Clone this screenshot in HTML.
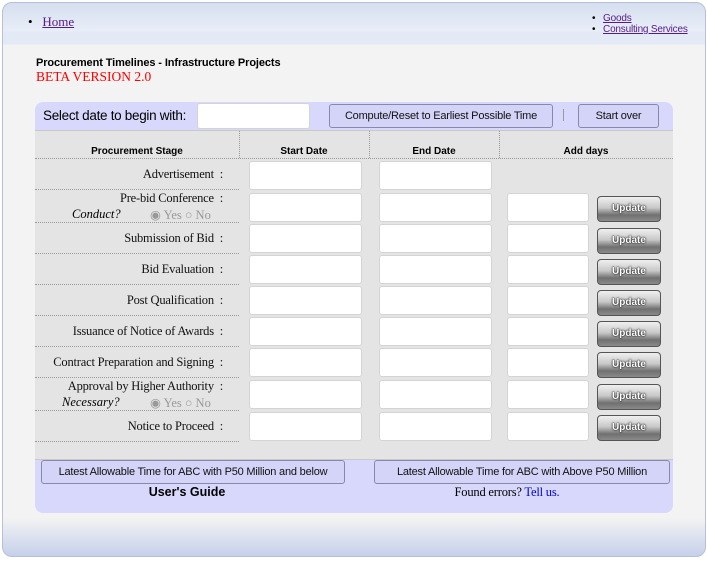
<!DOCTYPE html><html><head><style>
body{margin:0;width:707px;height:561px;background:#fff;position:relative;overflow:hidden;font-family:"Liberation Sans",sans-serif}
.a{position:absolute}
.frame{left:2px;top:2px;width:702px;height:553px;border:1px solid #b8c0d8;border-radius:10px;background:linear-gradient(#d6dff0 0,#e8eef7 28px,#e4eaf5 29px,#e4eaf5 41px,#f3f3f3 42px,#f3f3f3 515px,#c6d0ea 553px);overflow:hidden}
.inp{background:#fff;border:1px solid #d4d4d4;border-radius:3px}
.btn{background:#d4d4f8;border:1px solid #8888a8;border-radius:3px;font-size:11px;letter-spacing:-0.2px;text-align:center;color:#111;white-space:nowrap}
.upd{width:62px;height:24px;border:1px solid #555;border-radius:4px;background:linear-gradient(#f0f0f0,#c8c8c8 45%,#707070 75%,#8a8a8a);color:#fff;font-size:10px;font-weight:bold;text-align:center;line-height:24px;text-shadow:0 0 2px #000,0 0 1px #000}
.lbl{font-family:"Liberation Serif",serif;font-size:12.5px;letter-spacing:-0.2px;text-align:right;width:190px;left:33px;color:#111;white-space:nowrap}
.sep{left:35px;width:204px;border-top:1px dotted #999;height:0}
.rad{font-family:"Liberation Serif",serif;font-size:12.5px;color:#999}
</style></head><body>
<div class="a frame"></div>
<div class="a" style="left:28px;top:14px;font-family:'Liberation Serif',serif;font-size:13px">•&nbsp;&nbsp; <span style="color:#551a8b;text-decoration:underline">Home</span></div>
<div class="a" style="left:592px;top:13px;font-size:10px;line-height:11px;letter-spacing:-0.2px">•&nbsp;&nbsp; <span style="color:#551a8b;text-decoration:underline">Goods</span><br>•&nbsp;&nbsp; <span style="color:#551a8b;text-decoration:underline">Consulting Services</span></div>
<div class="a" style="left:36px;top:57px;font-size:11px;font-weight:bold;letter-spacing:-0.1px">Procurement Timelines - Infrastructure Projects</div>
<div class="a" style="left:36px;top:69px;font-family:'Liberation Serif',serif;font-size:13.5px;color:#f00">BETA VERSION 2.0</div>
<div class="a" style="left:35px;top:102px;width:638px;height:411px;background:#d8d8fc;border-radius:8px"></div>
<div class="a" style="left:35px;top:130px;width:638px;height:328px;background:#e4e4e4;border-top:1px solid #c8c8c8;border-bottom:1px solid #c8c8c8"></div>
<div class="a" style="left:43px;top:108px;font-size:13.5px;letter-spacing:-0.3px">Select date to begin with:</div>
<div class="a inp" style="left:197px;top:103px;width:111px;height:24px"></div>
<div class="a btn" style="left:329px;top:104px;width:222px;height:22px;line-height:22px">Compute/Reset to Earliest Possible Time</div>
<div class="a" style="left:563px;top:109px;width:1px;height:12px;background:#999"></div>
<div class="a btn" style="left:578px;top:104px;width:79px;height:22px;line-height:22px">Start over</div>
<div class="a" style="left:239px;top:131px;height:27px;border-left:1px dotted #999"></div>
<div class="a" style="left:369px;top:131px;height:27px;border-left:1px dotted #999"></div>
<div class="a" style="left:499px;top:131px;height:27px;border-left:1px dotted #999"></div>
<div class="a" style="left:35px;top:158px;width:638px;border-top:1px dotted #999"></div>
<div class="a" style="left:35px;top:146px;width:204px;text-align:center;font-size:10px;font-weight:bold">Procurement Stage</div>
<div class="a" style="left:239px;top:146px;width:130px;text-align:center;font-size:10px;font-weight:bold">Start Date</div>
<div class="a" style="left:369px;top:146px;width:130px;text-align:center;font-size:10px;font-weight:bold">End Date</div>
<div class="a" style="left:499px;top:146px;width:174px;text-align:center;font-size:10px;font-weight:bold">Add days</div>

<div class="a lbl" style="top:167px">Advertisement&nbsp; :</div>
<div class="a lbl" style="top:191px">Pre-bid Conference&nbsp; :</div>
<div class="a" style="left:72px;top:207px;font-family:'Liberation Serif',serif;font-size:12.5px;font-style:italic">Conduct?</div>
<div class="a rad" style="left:150px;top:207px">◉ Yes ○ No</div>
<div class="a lbl" style="top:231px">Submission of Bid&nbsp; :</div>
<div class="a lbl" style="top:262px">Bid Evaluation&nbsp; :</div>
<div class="a lbl" style="top:293px">Post Qualification&nbsp; :</div>
<div class="a lbl" style="top:324px">Issuance of Notice of Awards&nbsp; :</div>
<div class="a lbl" style="top:355px">Contract Preparation and Signing&nbsp; :</div>
<div class="a lbl" style="top:379px">Approval by Higher Authority&nbsp; :</div>
<div class="a" style="left:62px;top:395px;font-family:'Liberation Serif',serif;font-size:12.5px;font-style:italic">Necessary?</div>
<div class="a rad" style="left:150px;top:395px">◉ Yes ○ No</div>
<div class="a lbl" style="top:419px">Notice to Proceed&nbsp; :</div>

<div class="a sep" style="top:189px"></div><div class="a sep" style="top:222px"></div><div class="a sep" style="top:253px"></div><div class="a sep" style="top:284px"></div><div class="a sep" style="top:315px"></div><div class="a sep" style="top:346px"></div><div class="a sep" style="top:377px"></div><div class="a sep" style="top:410px"></div><div class="a sep" style="top:441px"></div>

<div class="a inp" style="left:249px;top:161px;width:111px;height:27px"></div><div class="a inp" style="left:379px;top:161px;width:111px;height:27px"></div>
<div class="a inp" style="left:249px;top:193px;width:111px;height:27px"></div><div class="a inp" style="left:379px;top:193px;width:111px;height:27px"></div><div class="a inp" style="left:507px;top:193px;width:80px;height:27px"></div><div class="a upd" style="left:597px;top:196px">Update</div>
<div class="a inp" style="left:249px;top:224px;width:111px;height:27px"></div><div class="a inp" style="left:379px;top:224px;width:111px;height:27px"></div><div class="a inp" style="left:507px;top:224px;width:80px;height:27px"></div><div class="a upd" style="left:597px;top:228px">Update</div>
<div class="a inp" style="left:249px;top:255px;width:111px;height:27px"></div><div class="a inp" style="left:379px;top:255px;width:111px;height:27px"></div><div class="a inp" style="left:507px;top:255px;width:80px;height:27px"></div><div class="a upd" style="left:597px;top:259px">Update</div>
<div class="a inp" style="left:249px;top:286px;width:111px;height:27px"></div><div class="a inp" style="left:379px;top:286px;width:111px;height:27px"></div><div class="a inp" style="left:507px;top:286px;width:80px;height:27px"></div><div class="a upd" style="left:597px;top:290px">Update</div>
<div class="a inp" style="left:249px;top:317px;width:111px;height:27px"></div><div class="a inp" style="left:379px;top:317px;width:111px;height:27px"></div><div class="a inp" style="left:507px;top:317px;width:80px;height:27px"></div><div class="a upd" style="left:597px;top:321px">Update</div>
<div class="a inp" style="left:249px;top:348px;width:111px;height:27px"></div><div class="a inp" style="left:379px;top:348px;width:111px;height:27px"></div><div class="a inp" style="left:507px;top:348px;width:80px;height:27px"></div><div class="a upd" style="left:597px;top:352px">Update</div>
<div class="a inp" style="left:249px;top:380px;width:111px;height:27px"></div><div class="a inp" style="left:379px;top:380px;width:111px;height:27px"></div><div class="a inp" style="left:507px;top:380px;width:80px;height:27px"></div><div class="a upd" style="left:597px;top:384px">Update</div>
<div class="a inp" style="left:249px;top:412px;width:111px;height:27px"></div><div class="a inp" style="left:379px;top:412px;width:111px;height:27px"></div><div class="a inp" style="left:507px;top:412px;width:80px;height:27px"></div><div class="a upd" style="left:597px;top:415px">Update</div>

<div class="a btn" style="left:41px;top:460px;width:302px;height:22px;line-height:22px">Latest Allowable Time for ABC with P50 Million and below</div>
<div class="a btn" style="left:374px;top:460px;width:294px;height:22px;line-height:22px">Latest Allowable Time for ABC with Above P50 Million</div>
<div class="a" style="left:35px;top:485px;width:304px;text-align:center;font-size:12.5px;font-weight:bold">User's Guide</div>
<div class="a" style="left:360px;top:485px;width:294px;text-align:center;font-family:'Liberation Serif',serif;font-size:12.5px;letter-spacing:-0.2px">Found errors? <span style="color:#00e">Tell us.</span></div>
</body></html>
